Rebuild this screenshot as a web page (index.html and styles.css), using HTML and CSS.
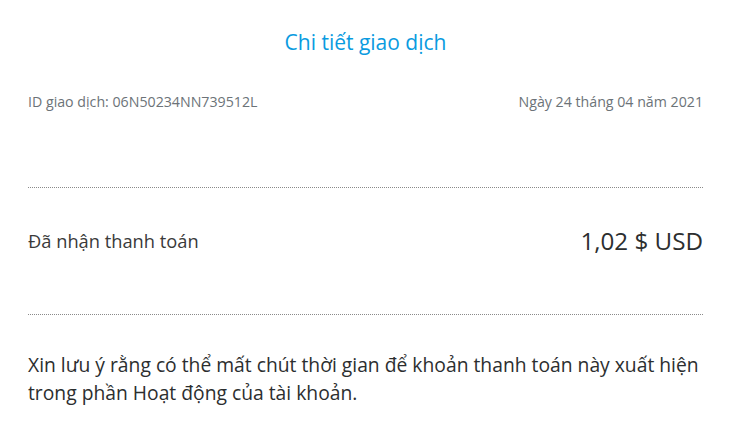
FILE: index.html
```html
<!DOCTYPE html>
<html lang="vi">
<head>
<meta charset="utf-8">
<link rel="stylesheet" href="styles.css">
</head>
<body>
<div class="page">
  <h1 class="title">Chi tiết giao dịch</h1>
  <div class="meta">
    <span>ID giao dịch: 06N50234NN739512L</span>
    <span>Ngày 24 tháng 04 năm 2021</span>
  </div>
  <div class="amount-row">
    <span class="label">Đã nhận thanh toán</span>
    <span class="amount">1,02 $ USD</span>
  </div>
  <p class="note">Xin lưu ý rằng có thể mất chút thời gian để khoản thanh toán này xuất hiện trong phần Hoạt động của tài khoản.</p>
</div>
</body>
</html>
```
FILE: styles.css
```css
html, body { margin: 0; padding: 0; background: #fff; }
body { font-family: "Open Sans", Lato, sans-serif; color: #2c2e2f; }
.page { padding: 0 33px 0 28px; }
.title { margin: 0; padding-top: 28px; text-align: center; font-size: 21px; font-weight: 400; color: #0a9be0; line-height: 28px; }
.meta { display: flex; justify-content: space-between; margin-top: 37px; font-size: 14.2px; color: #6c7378; line-height: 18px; }
.amount-row { display: flex; justify-content: space-between; align-items: center; margin-top: 76px; border-top: 1px dotted #8a8a8a; border-bottom: 1px dotted #8a8a8a; height: 104px; padding-bottom: 22px; }
.label { font-size: 18.3px; color: #3a3a3a; }
.amount { font-size: 24.2px; color: #2c2e2f; }
.note { margin: 36px 0 0; font-size: 19.3px; line-height: 28px; color: #2c2e2f; }
```
